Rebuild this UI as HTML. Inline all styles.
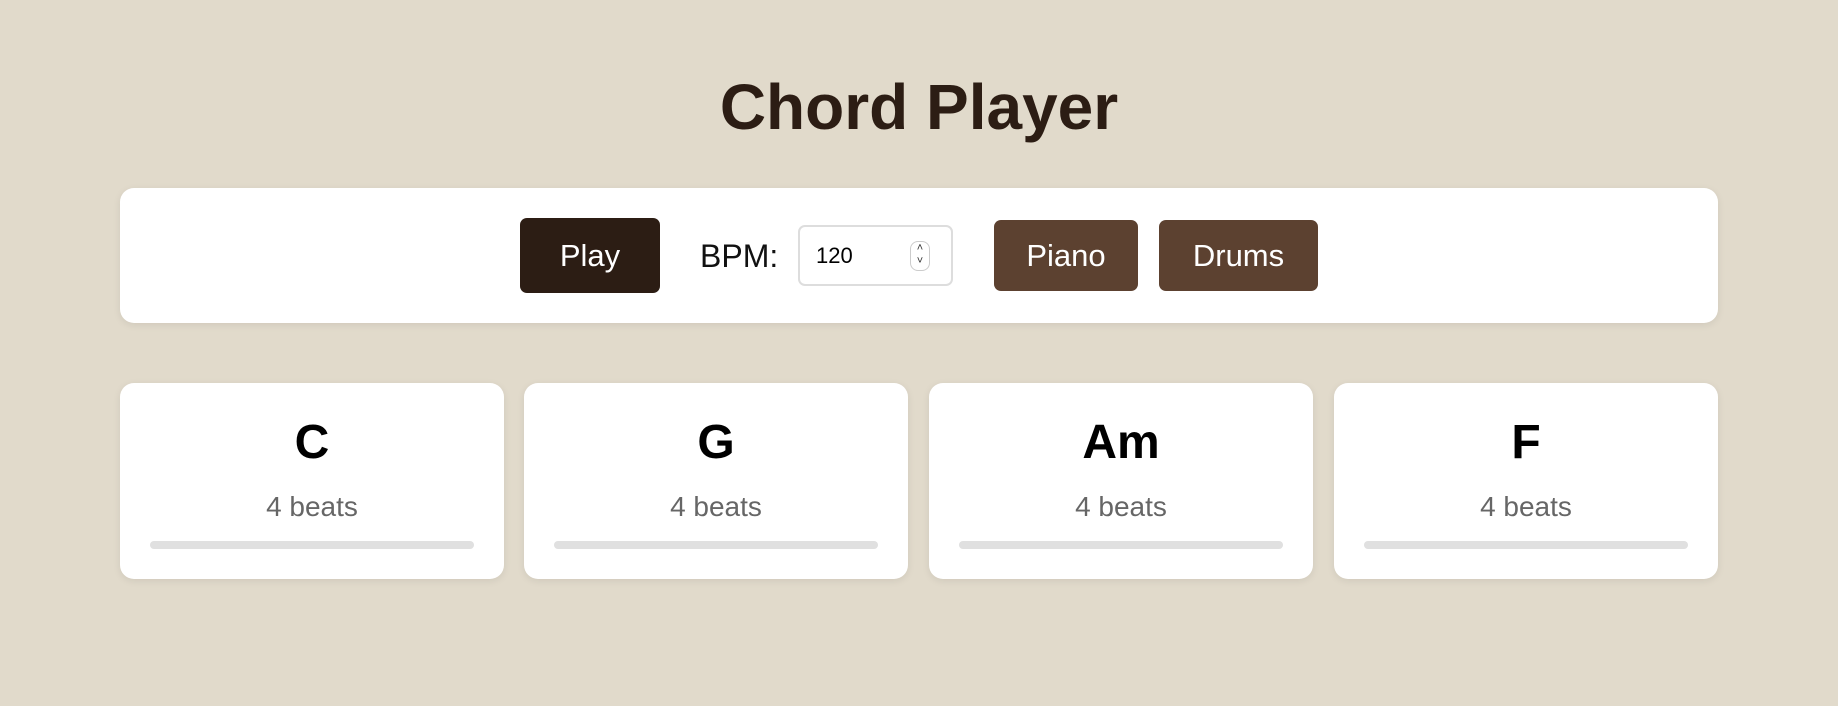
<!DOCTYPE html>
<html><head><style>
body{margin:0;width:1838px;height:706px;background:#e1dacb;font-family:"Liberation Sans",Arial,sans-serif;position:relative;overflow:hidden}
h1{position:absolute;left:0;right:0;top:62px;margin:0;text-align:center;font-size:64px;font-weight:bold;color:#2c1d14;line-height:90px}
.panel{position:absolute;left:120px;top:188px;width:1598px;height:135px;background:#fff;border-radius:14px;box-shadow:0 2px 8px rgba(0,0,0,0.08)}
.btn{position:absolute;color:#fff;font-size:31px;display:flex;align-items:center;justify-content:center;border-radius:7px}
.bpm{position:absolute;left:700px;top:236px;font-size:32px;color:#111;line-height:40px}
.inp{position:absolute;left:798px;top:225px;width:151px;height:57px;border:2px solid #ddd;border-radius:7px;background:#fff;box-sizing:content-box}
.inp span{position:absolute;left:16px;top:16px;font-size:22px;color:#000}
.spin{position:absolute;left:110px;top:14px;width:18px;height:28px;border:1px solid #ccc;border-radius:8px;font-size:11px;line-height:13px;text-align:center;color:#333}
.card{position:absolute;top:383px;width:384px;height:196px;background:#fff;border-radius:14px;box-shadow:0 2px 8px rgba(0,0,0,0.08)}
.card b{position:absolute;left:0;right:0;top:31px;text-align:center;font-size:48px;color:#000;line-height:58px}
.card i{position:absolute;left:0;right:0;top:107px;text-align:center;font-style:normal;font-size:28px;color:#666;line-height:34px}
.card s{position:absolute;left:30px;right:30px;top:158px;height:8px;border-radius:4px;background:#e0e0e0}
</style></head><body>
<h1>Chord Player</h1>
<div class="panel"></div>
<div class="btn" style="left:520px;top:218px;width:140px;height:75px;background:#2c1d14">Play</div>
<div class="bpm">BPM:</div>
<div class="inp"><span>120</span><div class="spin">˄<br>˅</div></div>
<div class="btn" style="left:994px;top:220px;width:144px;height:71px;background:#5c4130">Piano</div>
<div class="btn" style="left:1159px;top:220px;width:159px;height:71px;background:#5c4130">Drums</div>
<div class="card" style="left:120px"><b>C</b><i>4 beats</i><s></s></div>
<div class="card" style="left:524px"><b>G</b><i>4 beats</i><s></s></div>
<div class="card" style="left:929px"><b>Am</b><i>4 beats</i><s></s></div>
<div class="card" style="left:1334px"><b>F</b><i>4 beats</i><s></s></div>
</body></html>
